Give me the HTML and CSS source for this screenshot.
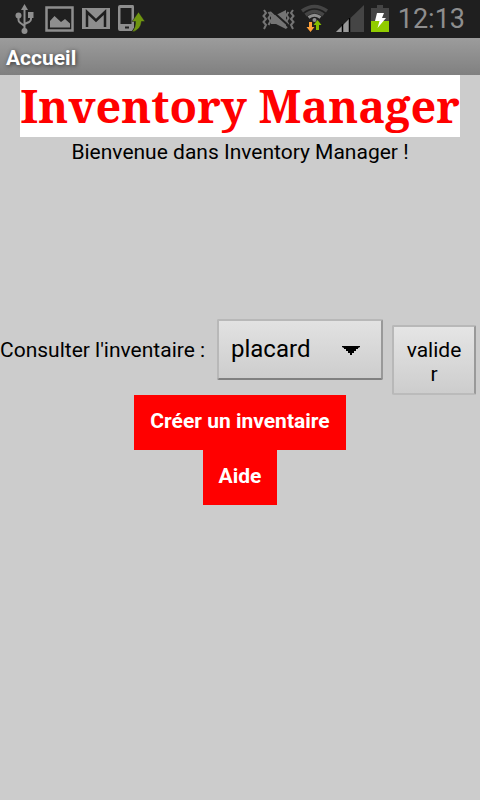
FILE: index.html
```html
<!DOCTYPE html>
<html lang="fr">
<head>
	<title>Accueil</title>
	<meta charset="utf-8">
	<meta name="viewport" content="width=device-width, initial-scale=1">
	<link rel="stylesheet" href="styles.css">
</head>
<body>
	<div class="statusbar">
		<svg class="status-left" width="150" height="38" viewBox="0 0 150 38">
			<!-- usb -->
			<g fill="none" stroke="#8e8e8e" stroke-width="2">
				<path d="M24.500 8V31M18.500 16V20Q18.500 22 20.500 23L24.500 26M31 16V19Q31 21 29 22L24.500 24"/>
			</g>
			<g fill="#8e8e8e">
				<path d="M24.500 4L28 10H21Z"/>
				<circle cx="18.500" cy="15.500" r="3"/>
				<rect x="28" y="12" width="5.500" height="6"/>
				<circle cx="24.500" cy="31" r="3"/>
			</g>
			<!-- picture -->
			<rect x="46.500" y="7.500" width="26" height="23" fill="none" stroke="#8e8e8e" stroke-width="2.500"/>
			<path d="M50 27.500V21L54.500 16L61 22L65 19L70 23.500V27.500Z" fill="#8e8e8e"/>
			<!-- mail -->
			<rect x="82" y="8" width="28" height="21" fill="#8e8e8e"/>
			<path d="M87 27V12L96 20.500L105 12V27" fill="none" stroke="#1f1f1f" stroke-width="2.500"/>
			<!-- phone -->
			<path d="M133 5H120Q118 5 118 7V29Q118 31 120 31H132L134 28V7Q134 5 133 5ZM120.500 8H131.500V24H120.500ZM125 26.500H129V28.500H125Z" fill="#8e8e8e" fill-rule="evenodd"/>
			<path d="M138.500 12L145 21.500H141.500Q141 30 132 32Q136 27 135.500 21.500H132Z" fill="#6f9510" stroke="#1f1f1f" stroke-width="0.500"/>
		</svg>
		<div class="status-right">
			<svg width="130" height="38" viewBox="260 0 130 38">
				<!-- vibrate -->
				<g fill="none" stroke="#747474" stroke-width="2">
					<path d="M264 10L266 13L263.500 16L266 19L263.500 22L266 25L264 29M268.500 12L270.500 15L268.500 18L270.500 21L268.500 25M293 10L291 13L293.500 16L291 19L293.500 22L291 25L293 29M288.500 12L286.500 15L288.500 18L286.500 21L288.500 25"/>
				</g>
				<path d="M271 15H276L286 10V29L276 24H271Z" fill="#747474"/>
				<path d="M271 10L289 26" stroke="#1f1f1f" stroke-width="2"/>
				<path d="M270 12L287 28" stroke="#747474" stroke-width="2"/>
				<!-- wifi -->
				<g fill="none" stroke-width="3.500">
					<path d="M302 11Q314.500 2 327 11" stroke="#454545"/>
					<path d="M305.500 15Q314.500 8 323.500 15" stroke="#454545"/>
					<path d="M308.500 17.500Q314.500 13 320.500 17.500" stroke="#8e8e8e" stroke-width="3"/>
				</g>
				<circle cx="314.500" cy="20" r="2" fill="#8e8e8e"/>
				<path d="M309 22H312V27H314.500L310.500 32L306.500 27H309Z" fill="#ffa13a"/>
				<path d="M317.500 20L321.500 25H319V30H316V25H313.500Z" fill="#84bd00"/>
				<!-- signal -->
				<path d="M364 5V32H336Z" fill="#454545"/>
				<path d="M349 19V32H336Z" fill="#9a9a9a"/>
				<path d="M342.500 24V32M349.500 18V32" stroke="#000" stroke-width="1.500"/>
				<!-- battery -->
				<path d="M371 8H377V5H383V8H389V21H371Z" fill="#454545"/>
				<rect x="371" y="21" width="18" height="11" fill="#91cc00"/>
				<path d="M377 13H384L382 18H386L377.500 28L379.500 21H375Z" fill="#fff"/>
			</svg>
			<span class="clock">12:13</span>
		</div>
	</div>
	<div class="titlebar">Accueil</div>

	<main>
		<h1>Inventory Manager</h1>
		<p class="welcome">Bienvenue dans Inventory Manager !</p>

		<form class="consult">
			<label for="inventaire">Consulter l'inventaire :</label>
			<div class="spinner">
				<select id="inventaire">
					<option>placard</option>
				</select>
				<svg class="arrow" width="18" height="10" viewBox="0 0 18 10">
					<path d="M0 0H18V1L16 2V3H14V5H12V7H10V9H8V7H6V5H4V3H2V2L0 1Z"/>
				</svg>
			</div>
			<button type="button" class="valider">valider</button>
		</form>

		<button type="button" class="red">Créer un inventaire</button>
		<button type="button" class="red">Aide</button>
	</main>
</body>
</html>
```
FILE: styles.css
```css
* {box-sizing: border-box;}

body {
	margin: 0;
	min-height: 100vh;
	background-color: #ccc;
	color: black;
	font-family: Roboto, sans-serif;
	font-size: 21px;
}

.statusbar {
	display: flex;
	justify-content: space-between;
	height: 38px;
	background-color: #1f1f1f;
}

.status-right {
	display: flex;
	padding-right: 15px;
}

.clock {
	padding-left: 8px;
	font-size: 27px;
	line-height: 38px;
	color: #8e8e8e;
}

.titlebar {
	height: 37px;
	padding-left: 6px;
	background: linear-gradient(#9c9c9c, #808080);
	color: white;
	font-weight: bold;
	line-height: 40px;
	text-shadow: 1px 1px 4px #333;
}

main {
	display: flex;
	flex-direction: column;
	align-items: center;
}

h1 {
	margin: 0;
	background-color: white;
	color: red;
	font-family: "Noto Serif", "Droid Serif", "DejaVu Serif", serif;
	font-size: 45px;
	font-weight: bold;
	line-height: 62px;
	white-space: nowrap;
}

.welcome {
	margin: 0 0 150px;
	line-height: 31px;
}

.consult {
	display: flex;
	align-items: flex-start;
	width: 100%;
	padding-right: 4px;
}

.consult label {
	flex: 1;
	line-height: 64px;
	white-space: nowrap;
}

.spinner {
	position: relative;
	width: 166px;
	margin: 1px 9px 0 0;
}

.spinner select {
	appearance: none;
	width: 100%;
	height: 61px;
	padding: 0 44px 2px 12px;
	border: 2px solid #b8b8b8;
	border-right-color: #999;
	border-bottom-color: #808080;
	border-radius: 2px;
	background: linear-gradient(#e2e2e2, #cdcdcd);
	color: black;
	font-family: inherit;
	font-size: 24px;
}

.arrow {
	position: absolute;
	top: 27px;
	right: 23px;
	pointer-events: none;
}

.valider {
	width: 84px;
	height: 70px;
	margin-top: 7px;
	padding: 4px 12px 0;
	border: 2px solid #b8b8b8;
	border-right-color: #999;
	border-bottom-color: #bbb;
	border-radius: 2px;
	background: linear-gradient(#e5e5e5, #cdcdcd);
	color: black;
	font-family: inherit;
	font-size: 21px;
	line-height: 24px;
	overflow-wrap: anywhere;
}

.red {
	padding: 0 16px 2px;
	border: 0;
	background-color: red;
	color: white;
	font-family: inherit;
	font-size: 21px;
	font-weight: bold;
	line-height: 53px;
}
```
